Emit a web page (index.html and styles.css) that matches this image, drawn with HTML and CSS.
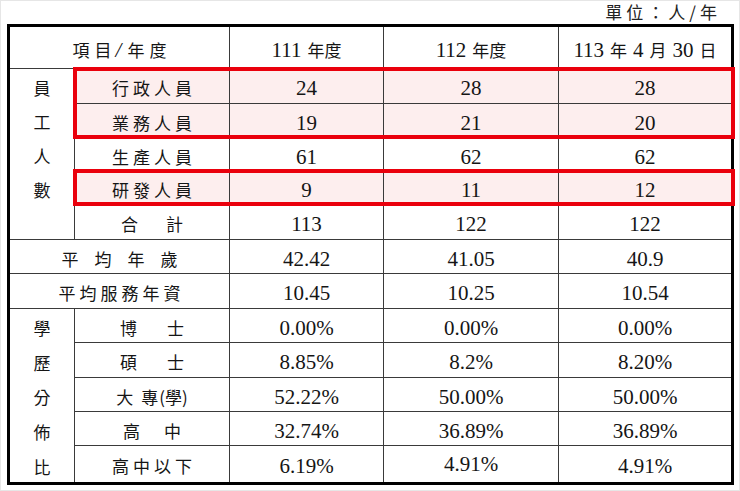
FILE: index.html
```html
<!DOCTYPE html>
<html lang="zh-Hant">
<head>
<meta charset="utf-8">
<title>員工資料</title>
<link rel="stylesheet" href="styles.css">
</head>
<body>
<div class="page">
  <div class="unit">單位：人/年</div>
  <div class="tbl">
    <div class="c span2 cjk sp5">項目<span class="slash">/</span>年度</div>
    <div class="c">111<span class="cjk ml">年度</span></div>
    <div class="c">112<span class="cjk ml">年度</span></div>
    <div class="c">113<span class="cjk mx">年</span>4<span class="cjk mx">月</span>30<span class="cjk ml">日</span></div>

    <div class="c vert rows5">
      <div class="vc cjk">員</div>
      <div class="vc cjk">工</div>
      <div class="vc cjk">人</div>
      <div class="vc cjk">數</div>
      <div class="vc"></div>
    </div>
    <div class="c hl cjk sp4">行政人員</div>
    <div class="c hl">24</div>
    <div class="c hl">28</div>
    <div class="c hl">28</div>

    <div class="c hl cjk sp4">業務人員</div>
    <div class="c hl">19</div>
    <div class="c hl">21</div>
    <div class="c hl">20</div>

    <div class="c cjk sp4">生產人員</div>
    <div class="c">61</div>
    <div class="c">62</div>
    <div class="c">62</div>

    <div class="c hl cjk sp4">研發人員</div>
    <div class="c hl">9</div>
    <div class="c hl">11</div>
    <div class="c hl">12</div>

    <div class="c cjk sp28">合計</div>
    <div class="c">113</div>
    <div class="c">122</div>
    <div class="c">122</div>

    <div class="c span2 cjk sp16">平均年歲</div>
    <div class="c">42.42</div>
    <div class="c">41.05</div>
    <div class="c">40.9</div>

    <div class="c span2 cjk sp4">平均服務年資</div>
    <div class="c">10.45</div>
    <div class="c">10.25</div>
    <div class="c">10.54</div>

    <div class="c vert rows5">
      <div class="vc cjk">學</div>
      <div class="vc cjk">歷</div>
      <div class="vc cjk">分</div>
      <div class="vc cjk">佈</div>
      <div class="vc cjk">比</div>
    </div>
    <div class="c cjk sp30">博士</div>
    <div class="c">0.00%</div>
    <div class="c">0.00%</div>
    <div class="c">0.00%</div>

    <div class="c cjk sp30">碩士</div>
    <div class="c">8.85%</div>
    <div class="c">8.2%</div>
    <div class="c">8.20%</div>

    <div class="c cjk">大<span class="gap">專</span>(學)</div>
    <div class="c">52.22%</div>
    <div class="c">50.00%</div>
    <div class="c">50.00%</div>

    <div class="c cjk sp24">高中</div>
    <div class="c">32.74%</div>
    <div class="c">36.89%</div>
    <div class="c">36.89%</div>

    <div class="c cjk sp4">高中以下</div>
    <div class="c">6.19%</div>
    <div class="c up">4.91%</div>
    <div class="c">4.91%</div>
  </div>
  <div class="mark m1"></div>
  <div class="mark m2"></div>
</div>
</body>
</html>
```

FILE: styles.css
```css
html, body {
  margin: 0;
  padding: 0;
  background: #fff;
}

.page {
  position: relative;
  width: 740px;
  height: 491px;
  box-sizing: border-box;
  border: 1px solid #e6e6e6;
  background: #fff;
  font-family: "Liberation Serif", "Noto Sans CJK TC", serif;
  color: #151515;
}

.unit {
  height: 23px;
  box-sizing: border-box;
  text-align: right;
  padding-right: 18px;
  font-family: "Noto Sans CJK TC", sans-serif;
  font-size: 17px;
  line-height: 22px;
  letter-spacing: 4px;
  color: #222;
}

.tbl {
  margin-left: 6px;
  width: 727px;
  box-sizing: border-box;
  border: 3px solid #000;
  background: #3a3a3a;
  display: grid;
  grid-template-columns: 64px 154px 153px 174px 172px;
  grid-template-rows: 41px 34px 34px 31px 33px 34px 33px 34px 33px 34px 33px 33px 36px;
  gap: 1px;
}

.c {
  background: #fff;
  display: flex;
  align-items: center;
  justify-content: center;
  font-size: 21px;
  line-height: 24px;
  padding-top: 4px;
  box-sizing: border-box;
  white-space: nowrap;
}

.span2 {
  grid-column: span 2;
}

.rows5 {
  grid-row: span 5;
}

.cjk {
  font-family: "Noto Sans CJK TC", sans-serif;
  font-size: 17px;
  font-weight: 400;
}

.c.cjk {
  font-size: 17px;
}

.slash {
  font-family: "Liberation Serif", serif;
  font-size: 21px;
  font-style: italic;
  margin: 0 1px 0 -1px;
}

.ml {
  margin-left: 6px;
}

.mx {
  margin: 0 6px;
}

.gap {
  margin-left: 8px;
  margin-right: 1px;
}

.sp4 { letter-spacing: 4px; padding-left: 4px; }
.sp5 { letter-spacing: 5px; padding-left: 5px; }
.sp16 { letter-spacing: 16px; padding-left: 16px; }
.sp24 { letter-spacing: 24px; padding-left: 24px; }
.sp28 { letter-spacing: 28px; padding-left: 28px; }
.sp30 { letter-spacing: 30px; padding-left: 30px; }

.hl {
  background: #fdeeee;
}

.vert {
  flex-direction: column;
  justify-content: flex-start;
  align-items: stretch;
  padding-top: 0;
}

.vc {
  flex: 1;
  display: flex;
  align-items: center;
  justify-content: center;
  padding-top: 4px;
}

.up {
  padding-top: 0;
}

.mark {
  position: absolute;
  box-sizing: border-box;
  border: 4px solid #ea000c;
  pointer-events: none;
}

.m1 {
  left: 72px;
  top: 66px;
  width: 662px;
  height: 72px;
}

.m2 {
  left: 72px;
  top: 168px;
  width: 662px;
  height: 37px;
}
```
